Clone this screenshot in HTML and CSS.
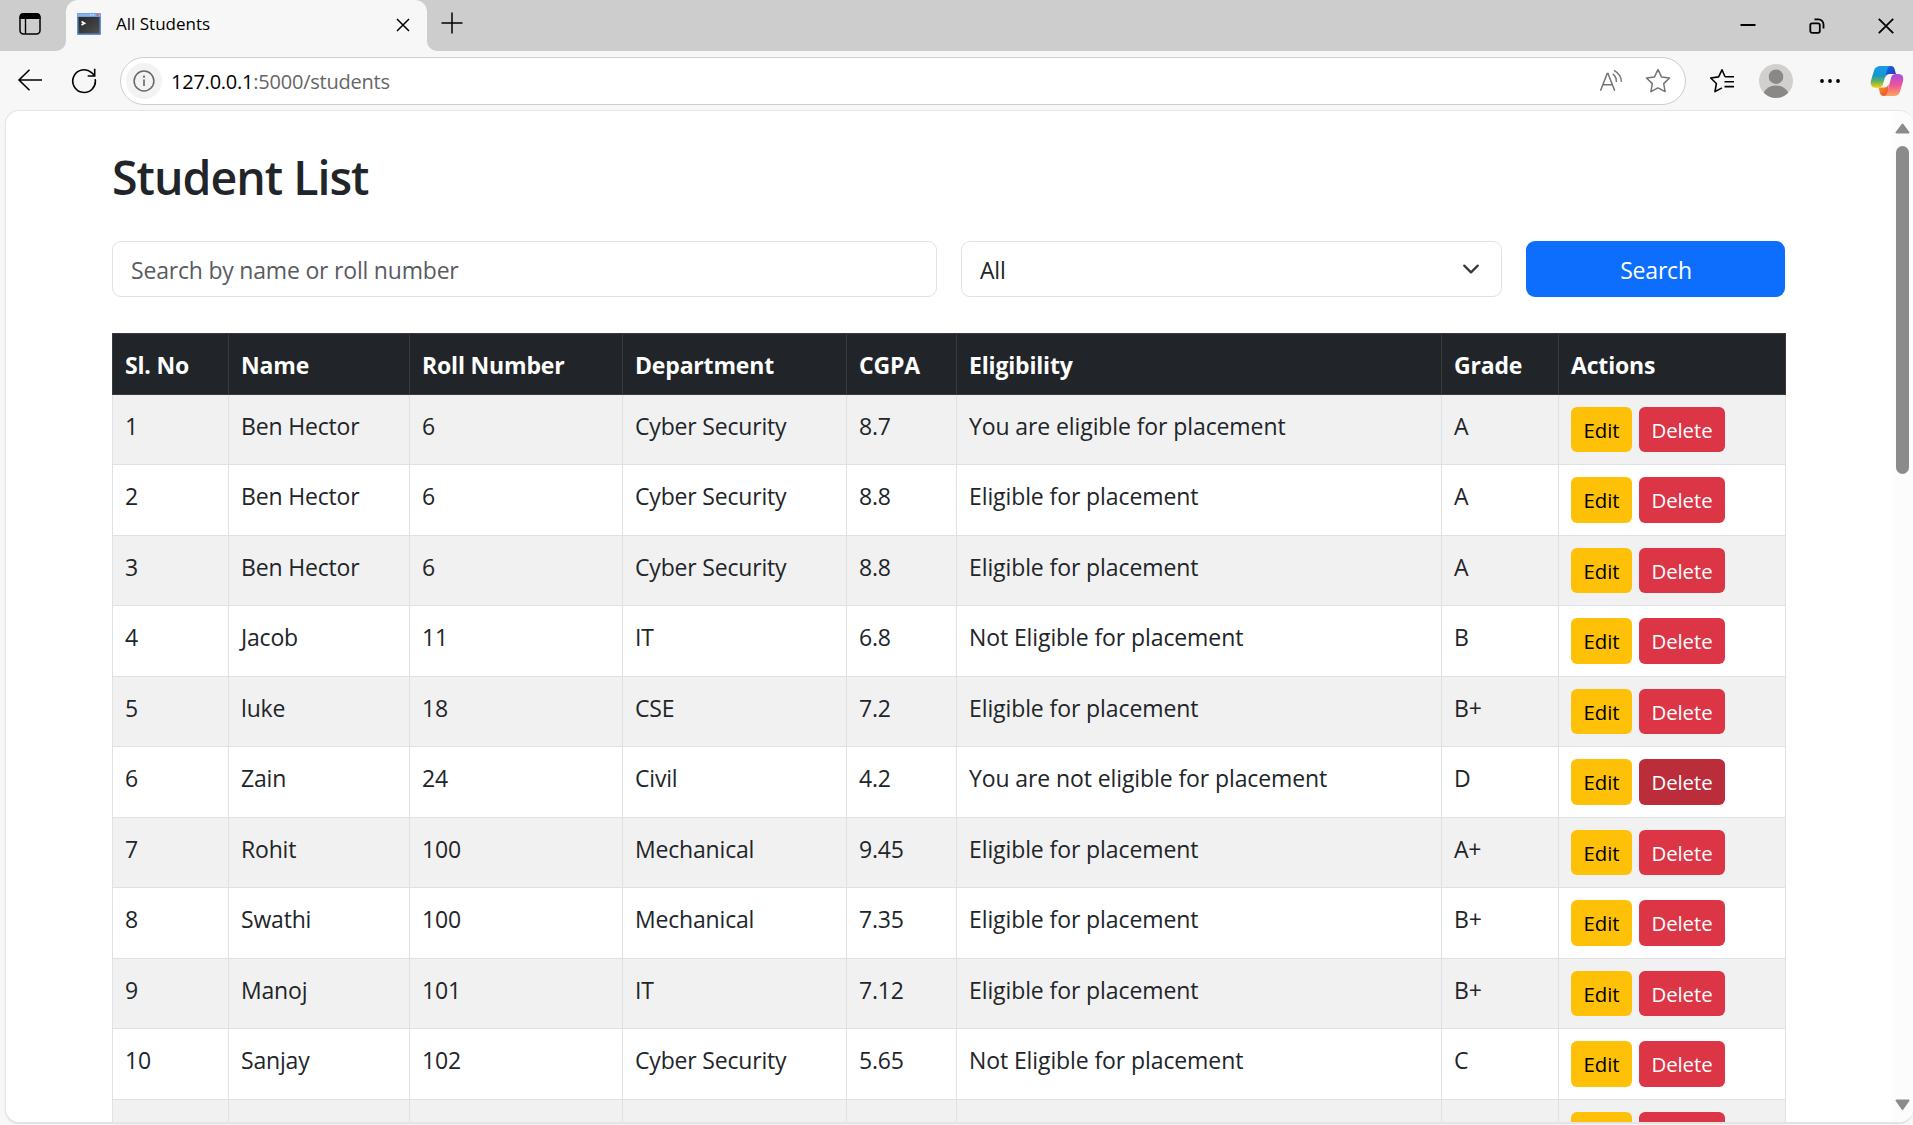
FILE: index.html
```html
<!DOCTYPE html>
<html lang="en">
<head>
<meta charset="utf-8">
<title>All Students</title>
<link rel="stylesheet" href="styles.css">
</head>
<body>
<div class="browser">
  <header class="titlebar">
    <div class="strip-left">
      <svg class="icon" width="24" height="24" viewBox="0 0 24 24"><rect x="2" y="2" width="20" height="20" rx="3.5" fill="none" stroke="#000" stroke-width="1.5"/><path d="M1.500 7V5a4 4 0 0 1 4-4h13a4 4 0 0 1 4 4v2z" fill="#000"/><path d="M7.500 7v15" stroke="#000" stroke-width="1.400"/></svg>
    </div>
    <div class="tab-well">
      <div class="tab">
        <svg width="24" height="22" viewBox="0 0 24 22"><defs><linearGradient id="term" x1="0" y1="0" x2="1" y2="1"><stop offset="0" stop-color="#252525"/><stop offset="1" stop-color="#505050"/></linearGradient></defs><rect width="24" height="22" rx="1" fill="#5f8fd6"/><rect x="0.500" y="0.500" width="23" height="3" fill="#86b1ea"/><path d="M13 1.800h5" stroke="#dfeaff" stroke-dasharray="1.500 1"/><rect x="19.500" y="1" width="2" height="1.800" fill="#e0525c"/><rect x="1.500" y="4" width="21" height="16.500" fill="url(#term)"/><path d="M4.500 8.500l3 1.700-3 1.800" fill="none" stroke="#fff" stroke-width="1.700"/></svg>
        <span class="tab-title">All Students</span>
        <svg class="tab-close" width="14" height="14" viewBox="0 0 14 14"><path d="M1 1l12 12M13 1L1 13" stroke="#000" stroke-width="1.500"/></svg>
      </div>
    </div>
    <div class="strip-right">
      <svg width="22" height="22" viewBox="0 0 22 22"><path d="M11 .5v21M.5 11h21" stroke="#000" stroke-width="1.500"/></svg>
      <div class="window-controls">
        <svg width="16" height="16" viewBox="0 0 16 16"><path d="M0.500 7h15" stroke="#000" stroke-width="2"/></svg>
        <svg width="16" height="16" viewBox="0 0 16 16"><rect x="1.300" y="5.300" width="9.500" height="9.500" rx="1.800" fill="none" stroke="#000" stroke-width="1.800"/><path d="M5.500 1.400h4a5 5 0 0 1 5 5v4.200" fill="none" stroke="#000" stroke-width="1.800"/></svg>
        <svg width="16" height="16" viewBox="0 0 16 16"><path d="M0.800.8l14.400 14.400M15.200.8L.8 15.200" stroke="#000" stroke-width="1.800"/></svg>
      </div>
    </div>
  </header>

  <nav class="toolbar">
    <svg class="back" width="26" height="24" viewBox="0 0 26 24"><path d="M25 12H2M12.500 1.700L2 12l10.500 10.300" fill="none" stroke="#000" stroke-width="1.600"/></svg>
    <svg class="reload" width="26" height="26" viewBox="0 0 26 26"><path d="M24.200 11.200A11.300 11.300 0 1 1 20.600 4.700L23.500 7.500M23.700.8v7.200h-7" fill="none" stroke="#000" stroke-width="1.600"/></svg>
    <div class="address">
      <span class="site-info"><svg width="22" height="22" viewBox="0 0 22 22"><circle cx="11" cy="11" r="9.900" fill="none" stroke="#666" stroke-width="1.500"/><path d="M11 9.500v6.500" stroke="#666" stroke-width="1.600"/><circle cx="11" cy="6.700" r="1.100" fill="#666"/></svg></span>
      <span class="url"><span class="host">127.0.0.1</span>:5000/students</span>
      <svg class="read" width="24" height="24" viewBox="0 0 24 24"><g fill="none" stroke="#737373" stroke-width="1.500"><path d="M1.500 21.800L8.200 4.500h.8l6.700 17.300M4 15.800h9.500"/><path d="M13.800 5.200c2.600 1.800 3.700 4.300 3.600 7.800M15 1.300c4.800 2.700 7.200 6.600 7.500 11.500"/></g></svg>
      <svg class="star" width="26" height="26" viewBox="0 0 26 26"><path d="M13 1.600l3.500 7.300 8 1.100-5.800 5.600 1.400 8-7.100-3.800-7.100 3.800 1.400-8L1.500 10l8-1.100z" fill="none" stroke="#737373" stroke-width="1.500" stroke-linejoin="round"/></svg>
    </div>
    <svg class="favorites" width="26" height="26" viewBox="0 0 26 26"><path d="M16 8.800L13 1.800 9.600 8.900 1.700 10l5.700 5.500L6 23.600l7-3.700M16 8.800h9" fill="none" stroke="#000" stroke-width="1.600" stroke-linejoin="round"/><path d="M15.500 13.700h9.500M15.500 18.600h9.500" stroke="#000" stroke-width="1.600"/></svg>
    <svg class="profile" width="34" height="34" viewBox="0 0 34 34"><defs><clipPath id="disc"><circle cx="17" cy="17" r="17"/></clipPath></defs><g clip-path="url(#disc)"><rect width="34" height="34" fill="#d2d0ce"/><circle cx="17" cy="12.700" r="7.300" fill="#8a8886"/><ellipse cx="17" cy="32.500" rx="13" ry="11" fill="#8a8886"/></g></svg>
    <svg class="more" width="22" height="8" viewBox="0 0 22 8"><circle cx="3" cy="4" r="1.900"/><circle cx="11" cy="4" r="1.900"/><circle cx="19" cy="4" r="1.900"/></svg>
    <svg class="copilot" width="34" height="32" viewBox="0 0 34 32">
      <defs>
        <linearGradient id="cpA" x1="0" y1="0" x2="0" y2="1"><stop offset="0" stop-color="#1a9af0"/><stop offset=".45" stop-color="#1398c8"/><stop offset=".7" stop-color="#63b35a"/><stop offset="1" stop-color="#f5cf0c"/></linearGradient>
        <linearGradient id="cpB" x1="0" y1="0" x2="0" y2="1"><stop offset="0" stop-color="#a44dea"/><stop offset=".5" stop-color="#ee5496"/><stop offset="1" stop-color="#ffa45e"/></linearGradient>
        <linearGradient id="cpC" x1="0" y1="0" x2="1" y2="1"><stop offset="0" stop-color="#1c66dd"/><stop offset="1" stop-color="#2438b8"/></linearGradient>
        <linearGradient id="cpD" x1="0" y1="0" x2="1" y2="1"><stop offset="0" stop-color="#f7a428"/><stop offset="1" stop-color="#ea4630"/></linearGradient>
      </defs>
      <path d="M16 1h5c2.200 0 3.200 1.500 3.700 3.500L26 9h-6c-3 0-4 1.500-4.700 4z" fill="url(#cpC)"/>
      <path d="M18 31h-4.500c-2.200 0-3.200-1.500-3.700-3.500L8.500 22.500H14c3 0 4-1.500 4.700-4z" fill="url(#cpD)"/>
      <path d="M10.500 1H21c-2 0-3.100 1.500-3.800 3.800L13 19c-.8 2.500-2 3.700-4.800 3.700H5.800C1.500 22.700 0 19.500 1 15.500L4 5.500C5 2.500 7 1 10.500 1z" fill="url(#cpA)"/>
      <path d="M23.500 31H13.500c2 0 3.100-1.500 3.800-3.800L21 13c.8-2.500 2-4 4.800-4h2.400c4.300 0 5.800 3.200 4.800 7.200l-3 10.300c-1 3-3 4.500-6.500 4.500z" fill="url(#cpB)"/>
    </svg>
  </nav>

  <div class="viewport">
    <main class="page">
      <h2 class="heading">Student List</h2>
      <form class="search-form">
        <input class="field" type="text" placeholder="Search by name or roll number">
        <div class="select"><span class="select-value">All</span><svg width="18" height="18" viewBox="0 0 16 16"><path d="m2 5 6 6 6-6" fill="none" stroke="#343a40" stroke-width="2" stroke-linecap="round" stroke-linejoin="round"/></svg></div>
        <button class="search-button" type="button">Search</button>
      </form>
      <table class="students">
        <colgroup><col class="c-no"><col class="c-name"><col class="c-roll"><col class="c-dept"><col class="c-cgpa"><col class="c-elig"><col class="c-grade"><col class="c-act"></colgroup>
        <thead><tr><th>Sl. No</th><th>Name</th><th>Roll Number</th><th>Department</th><th>CGPA</th><th>Eligibility</th><th>Grade</th><th>Actions</th></tr></thead>
        <tbody>
          <tr><td>1</td><td>Ben Hector</td><td>6</td><td>Cyber Security</td><td>8.7</td><td>You are eligible for placement</td><td>A</td><td><div class="actions"><a class="btn edit">Edit</a><a class="btn delete">Delete</a></div></td></tr>
          <tr><td>2</td><td>Ben Hector</td><td>6</td><td>Cyber Security</td><td>8.8</td><td>Eligible for placement</td><td>A</td><td><div class="actions"><a class="btn edit">Edit</a><a class="btn delete">Delete</a></div></td></tr>
          <tr><td>3</td><td>Ben Hector</td><td>6</td><td>Cyber Security</td><td>8.8</td><td>Eligible for placement</td><td>A</td><td><div class="actions"><a class="btn edit">Edit</a><a class="btn delete">Delete</a></div></td></tr>
          <tr><td>4</td><td>Jacob</td><td>11</td><td>IT</td><td>6.8</td><td>Not Eligible for placement</td><td>B</td><td><div class="actions"><a class="btn edit">Edit</a><a class="btn delete">Delete</a></div></td></tr>
          <tr><td>5</td><td>luke</td><td>18</td><td>CSE</td><td>7.2</td><td>Eligible for placement</td><td>B+</td><td><div class="actions"><a class="btn edit">Edit</a><a class="btn delete">Delete</a></div></td></tr>
          <tr><td>6</td><td>Zain</td><td>24</td><td>Civil</td><td>4.2</td><td>You are not eligible for placement</td><td>D</td><td><div class="actions"><a class="btn edit">Edit</a><a class="btn delete hovered">Delete</a></div></td></tr>
          <tr><td>7</td><td>Rohit</td><td>100</td><td>Mechanical</td><td>9.45</td><td>Eligible for placement</td><td>A+</td><td><div class="actions"><a class="btn edit">Edit</a><a class="btn delete">Delete</a></div></td></tr>
          <tr><td>8</td><td>Swathi</td><td>100</td><td>Mechanical</td><td>7.35</td><td>Eligible for placement</td><td>B+</td><td><div class="actions"><a class="btn edit">Edit</a><a class="btn delete">Delete</a></div></td></tr>
          <tr><td>9</td><td>Manoj</td><td>101</td><td>IT</td><td>7.12</td><td>Eligible for placement</td><td>B+</td><td><div class="actions"><a class="btn edit">Edit</a><a class="btn delete">Delete</a></div></td></tr>
          <tr><td>10</td><td>Sanjay</td><td>102</td><td>Cyber Security</td><td>5.65</td><td>Not Eligible for placement</td><td>C</td><td><div class="actions"><a class="btn edit">Edit</a><a class="btn delete">Delete</a></div></td></tr>
          <tr><td></td><td></td><td></td><td></td><td></td><td></td><td></td><td><div class="actions"><a class="btn edit"></a><a class="btn delete"></a></div></td></tr>
        </tbody>
      </table>
    </main>
    <div class="scrollbar">
      <svg width="15" height="11" viewBox="0 0 15 11"><path d="M7.500 1.500L13.500 9.500H1.500z" fill="#8b8b8b" stroke="#8b8b8b" stroke-width="2" stroke-linejoin="round"/></svg>
      <div class="thumb"></div>
      <svg class="down" width="15" height="12" viewBox="0 0 15 12"><path d="M7.500 10L1.500 1.500h12z" fill="#8b8b8b" stroke="#8b8b8b" stroke-width="2" stroke-linejoin="round"/></svg>
    </div>
  </div>
</div>
</body>
</html>
```
FILE: styles.css
```css
* { box-sizing: border-box; }

body {
  margin: 0;
  font-family: "Open Sans", "Noto Sans", sans-serif;
  color: #212529;
}

svg { display: block; flex: none; }

.browser {
  display: flex;
  flex-direction: column;
  width: 1913px;
  height: 1125px;
  overflow: hidden;
  background: #f7f7f7;
}

/* Title bar */
.titlebar { display: flex; flex: none; height: 51px; }
.strip-left {
  width: 66px;
  padding: 12px 0 0 18px;
  background: #cdcdcd;
  border-bottom-right-radius: 10px;
}
.tab-well { width: 361px; background: #cdcdcd; }
.tab {
  display: flex;
  align-items: flex-start;
  height: 51px;
  padding: 13px 17px 0 11px;
  background: #f7f7f7;
  border-radius: 12px 12px 0 0;
}
.tab-title {
  flex: 1;
  padding-left: 15px;
  font-size: 17px;
  line-height: 22px;
  color: #000;
}
.tab-close { margin-top: 5px; }
.strip-right {
  display: flex;
  flex: 1;
  justify-content: space-between;
  padding: 12px 19px 0 14px;
  background: #cdcdcd;
  border-bottom-left-radius: 10px;
}
.window-controls { display: flex; gap: 53px; padding-top: 6px; }

/* Toolbar */
.toolbar {
  display: flex;
  flex: none;
  align-items: center;
  height: 59px;
  padding-left: 17px;
}
.back { margin-bottom: 1px; }
.reload { margin: 0 23px 0 28px; }
.address {
  display: flex;
  align-items: center;
  width: 1566px;
  height: 48px;
  padding: 0 14px 0 5px;
  background: #fff;
  border: 1px solid #cecece;
  border-radius: 24px;
}
.site-info {
  display: flex;
  align-items: center;
  justify-content: center;
  width: 36px;
  height: 36px;
  background: #f3f3f3;
  border-radius: 50%;
}
.url {
  flex: 1;
  padding: 2px 0 0 9px;
  font-size: 20px;
  letter-spacing: -.23px;
  line-height: 30px;
  color: #666;
}
.host { color: #000; }
.read { margin-right: 22px; }
.favorites { margin-left: 23px; }
.profile { margin-left: 24px; }
.more { margin-left: 26px; }
.copilot { margin-left: 29px; }

/* Page area */
.viewport {
  display: flex;
  flex: none;
  height: 1013px;
  margin-left: 5px;
  background: #fff;
  border: 1px solid #e5e5e5;
  border-right: 0;
  border-radius: 14px;
  box-shadow: 0 1px 1px #dedede;
  overflow: hidden;
}
.page { flex: 1; padding: 32px 106px 0; }
.heading {
  margin: 0 0 29px;
  font-size: 46.5px;
  font-weight: 600;
  letter-spacing: -1px;
  line-height: 69px;
}

.search-form { display: flex; gap: 24px; height: 56px; width: 1673px; margin-bottom: 36px; }
.field, .select {
  border: 1px solid #dee2e6;
  border-radius: 9px;
  background: #fff;
  font: 400 23px/34px "Open Sans", "Noto Sans", sans-serif;
  letter-spacing: -.2px;
  color: #212529;
}
.field { width: 825px; padding: 2px 18px 0; }
.field::placeholder { color: #595c5f; opacity: 1; }
.select { display: flex; align-items: center; justify-content: space-between; width: 541px; padding: 0 21px 0 18px; }
.select-value { padding-top: 2px; }
.search-button {
  flex: 1;
  padding: 2px 0 0 1px;
  border: 0;
  border-radius: 9px;
  background: #0d6efd;
  color: #fff;
  font: 400 23px/36px "Open Sans", "Noto Sans", sans-serif;
  letter-spacing: -.2px;
}

/* Student table */
.students {
  width: 1674px;
  table-layout: fixed;
  border-collapse: separate;
  border-spacing: 0;
  font-size: 23px;
  line-height: 36px;
  letter-spacing: -.18px;
}
.c-no { width: 117px; }
.c-name { width: 181px; }
.c-roll { width: 213px; }
.c-dept { width: 224px; }
.c-cgpa { width: 110px; }
.c-elig { width: 485px; }
.c-grade { width: 117px; }
.c-act { width: 227px; }

.students th, .students td {
  padding: 13px 12px 0;
  border: 0 solid #dee2e6;
  border-width: 0 1px 1px 0;
  text-align: left;
  vertical-align: top;
}
.students th:first-child, .students td:first-child { border-left-width: 1px; padding-left: 12px; }
.students td:nth-child(6) { letter-spacing: -.1px; }
.students th {
  height: 62px;
  padding-top: 13px;
  border-color: #373b3e;
  border-top-width: 1px;
  background: #212529;
  color: #fff;
  font-weight: 700;
}
.students td { height: 71px; }
.students td:last-child { padding-top: 12px; }
.students tbody tr:nth-child(odd) td { height: 70px; background: #f1f1f1; }

.actions { display: flex; gap: 7px; height: 46px; }
.students tr:nth-child(odd) .actions { height: 45px; }
.btn {
  padding: 8px 0 0;
  border-radius: 6px;
  font-size: 20.4px;
  line-height: 31px;
  letter-spacing: -.1px;
  text-align: center;
}
.edit { width: 61px; background: #ffc107; color: #000; }
.delete { width: 86px; background: #dc3545; color: #fff; }
.hovered { background: #bb2d3b; }

/* Scrollbar */
.scrollbar {
  display: flex;
  flex-direction: column;
  align-items: center;
  width: 22px;
  padding: 12px 0 11px;
  background: #fcfcfc;
}
.thumb { width: 13px; height: 328px; margin-top: 12px; border-radius: 7px; background: #8b8b8b; }
.down { margin-top: auto; }
```
